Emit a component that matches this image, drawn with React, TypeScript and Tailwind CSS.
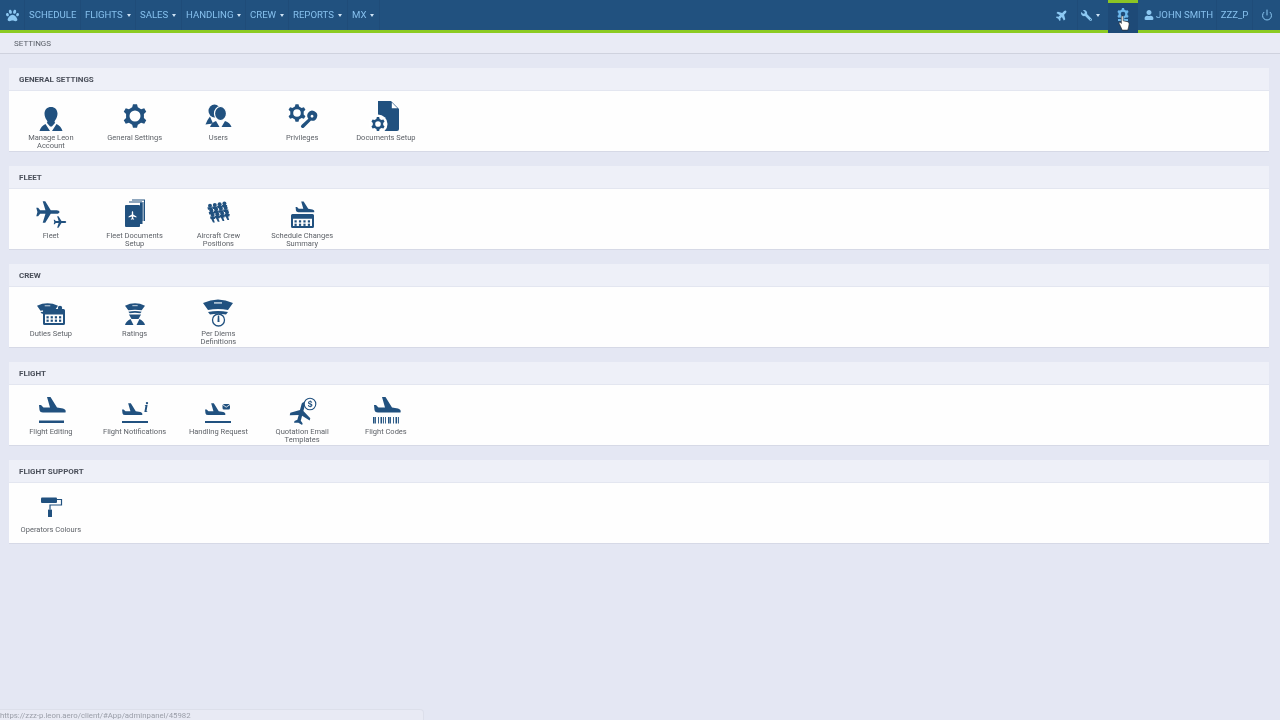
import type { ReactNode } from 'react';
import { FaPaw, FaPlane, FaWrench, FaUser } from 'react-icons/fa';
import { Power } from 'lucide-react';

const BLUE = '#21517f';

const gearPath = (cx: number, cy: number, r: number, hole: number, teeth = 6) => {
  const pts: string[] = [];
  const step = (Math.PI * 2) / teeth;
  for (let i = 0; i < teeth; i++) {
    const a = i * step - Math.PI / 2;
    const w = step * 0.2;
    const base = r * 0.76;
    const p = [
      [a - w * 1.5, base],
      [a - w * 0.8, r],
      [a + w * 0.8, r],
      [a + w * 1.5, base],
    ];
    p.forEach(([t, d]) => pts.push(`${(cx + Math.cos(t) * d).toFixed(2)} ${(cy + Math.sin(t) * d).toFixed(2)}`));
  }
  return `M${pts.join('L')}Z M${cx - hole} ${cy}a${hole} ${hole} 0 1 0 ${hole * 2} 0a${hole} ${hole} 0 1 0 ${-hole * 2} 0Z`;
};

const Gear = ({ cx, cy, r, hole }: { cx: number; cy: number; r: number; hole: number }) => (
  <path d={gearPath(cx, cy, r, hole)} fillRule="evenodd" />
);

// side view plane, x 8-35, y 5-21 at scale 1
const SidePlane = ({ x = 0, y = 0, s = 1 }: { x?: number; y?: number; s?: number }) => (
  <path
    transform={`translate(${x} ${y}) scale(${s})`}
    d="M8 13L10 13L12.5 15.5L19 15.5L16 5L19.5 5L26 15.5L32 16.5Q35.5 17.5 34.5 20.5L12 20.5Q9 20.5 8.5 18Z"
  />
);

const TopPlane = ({ x, y, s, r = 0 }: { x: number; y: number; s: number; r?: number }) => (
  <path
    transform={`translate(${x} ${y}) rotate(${r}) scale(${s}) translate(-12 -12)`}
    d="M22 12c0-1-1.2-1.6-2.4-1.6H14.4L9.6 2.6H7.4l2.4 7.8H5.2L3.4 8.2H1.8L2.8 12L1.8 15.8H3.4L5.2 13.6H9.8L7.4 21.4H9.6L14.4 13.6H19.6C20.8 13.6 22 13 22 12Z"
  />
);

const Calendar = ({ x, y, w, h }: { x: number; y: number; w: number; h: number }) => {
  const cells: ReactNode[] = [];
  for (let r = 0; r < 2; r++)
    for (let c = 0; c < 4; c++)
      cells.push(<rect key={`${r}${c}`} x={x + 3.5 + c * ((w - 7) / 3.6)} y={y + h * 0.45 + r * 3.4} width="2.2" height="2.2" />);
  return (
    <>
      <path
        fillRule="evenodd"
        d={`M${x + 1.5} ${y}h${w - 3}q1.5 0 1.5 1.5v${h - 3}q0 1.5-1.5 1.5h${-(w - 3)}q-1.5 0-1.5-1.5v${-(h - 3)}q0-1.5 1.5-1.5Z M${x + 2} ${y + h * 0.34}v${h * 0.66 - 2}h${w - 4}v${-(h * 0.66 - 2)}Z`}
      />
      {cells}
    </>
  );
};

const Cap = ({ x, y, w }: { x: number; y: number; w: number }) => {
  const s = w / 30;
  return (
    <g transform={`translate(${x} ${y}) scale(${s})`}>
      <path d="M0 4Q15-3 30 4L25 11Q15 9 5 11Z" />
      <path d="M5 13Q15 11 25 13L23 15.500Q15 14 7 15.500Z" />
      <rect x="11" y="3" width="8" height="1.800" fill="#a8bdd0" />
    </g>
  );
};

const Svg = ({ children }: { children: ReactNode }) => (
  <svg width="40" height="36" viewBox="0 0 40 36" fill={BLUE} className="block">
    {children}
  </svg>
);

const icons: Record<string, ReactNode> = {
  manage: (
    <Svg>
      <path d="M20 9c3.800 0 6.500 2.600 6.500 6.600 0 2.300-.8 5-2.300 6.700-.8 1-.9 2 0 2.500l-3.300 3.700h-1.800l-3.300-3.700c.9-.5.8-1.500 0-2.500-1.500-1.700-2.300-4.400-2.300-6.700C13.500 11.600 16.200 9 20 9Z" />
      <path d="M14.500 26l4.500 7H8.500q1.500-5 6-7ZM25.500 26l-4.500 7h10.500q-1.500-5-6-7Z" />
    </Svg>
  ),
  general: <Svg><Gear cx={20} cy={18} r={12} hole={5.500} /></Svg>,
  users: (
    <Svg>
      <ellipse cx={16.500} cy={13} rx={6} ry={6.500} />
      <path d="M12 18.500Q9 22 7.500 26.500L15 25.500Z" />
      <ellipse cx={22.500} cy={15.500} rx={6} ry={7} stroke="#fff" strokeWidth="1.200" />
      <path d="M18 23l3.500 6H12q1.500-4.500 6-6ZM27 23l-3.500 6H33.500q-1.500-4.500-6.500-6Z" />
    </Svg>
  ),
  privileges: (
    <Svg>
      <Gear cx={15} cy={15} r={9} hole={3.800} />
      <g transform="translate(0 -3)">
        <path fillRule="evenodd" d="M26 18a5 5 0 1 1 3 7.500L22 32.500q-1.200 1-2.500 0t0-2.500l6.800-6.300A5 5 0 0 1 26 18ZM30 19.800a1.400 1.400 0 1 0 .1 0Z" />
      </g>
    </Svg>
  ),
  documents: (
    <Svg>
      <path d="M12 3h13l8 8v20q0 2-2 2H12Z" />
      <path d="M25.800 4.500l5.700 5.700h-5.700Z" fill="#fff" />
      <circle cx={12} cy={26} r={9.500} fill="#fff" />
      <Gear cx={12} cy={26} r={7} hole={2.800} />
    </Svg>
  ),
  fleet: (
    <Svg>
      <TopPlane x={17} y={16} s={1.150} />
      <TopPlane x={29} y={26} s={0.620} />
    </Svg>
  ),
  fleetDocs: (
    <Svg>
      <path d="M25 6.500h2.500V28H25Z" />
      <path d="M14 5.500h13v1H14ZM17 3.500h13V25h-1V4.500H17ZM27.500 6h1v19h-1Z" />
      <rect x={10} y={9} width={15} height={22} rx={1} />
      <g fill="#fff"><TopPlane x={17.500} y={19.500} s={0.420} r={-90} /></g>
    </Svg>
  ),
  crewPos: (
    <Svg>
      {[0, 1, 2, 3].map((c) => (
        <g key={c} transform={`translate(${10 + c * 4.800} ${8 - c * 0.8})`}>
          {[0, 1, 2].map((r) => (
            <g key={r} transform={`translate(${r * 1.300} ${r * 4.600})`}>
              <circle cx={2} cy={1.800} r={2} />
              <path d="M-.6 3.300h5.400l-.5 2.500H0Z" />
            </g>
          ))}
          <path d="M3 14.500h2.500l1.300 4h-1.800Z" />
        </g>
      ))}
    </Svg>
  ),
  scheduleChanges: (
    <Svg>
      <SidePlane x={8} y={2} s={0.700} />
      <Calendar x={9} y={18} w={23} h={14} />
    </Svg>
  ),
  duties: (
    <Svg>
      <Cap x={6} y={9} w={21} />
      <Calendar x={12} y={15} w={22} h={16} />
      <circle cx={29} cy={14} r={2.200} />
    </Svg>
  ),
  ratings: (
    <Svg>
      <Cap x={10} y={9} w={20} />
      <path d="M14 20.500h12l-2.500 4.500h-7Z" />
      <path d="M15.500 25l3 6H10q.8-3.500 5.500-6ZM24.500 25l-3 6h8.500q-.8-3.500-5.500-6Z" />
    </Svg>
  ),
  perDiems: (
    <Svg>
      <Cap x={5} y={5} w={30} />
      <circle cx={20.500} cy={26} r={6} fill="none" stroke={BLUE} strokeWidth="1.300" />
      <path d="M19.800 21.500h1.400l.3 6.500h-2Z" />
    </Svg>
  ),
  editing: (
    <Svg>
      <SidePlane />
      <rect x={8} y={28.500} width={25} height={2.500} />
    </Svg>
  ),
  notifications: (
    <Svg>
      <SidePlane x={1} y={7.500} s={0.760} />
      <rect x={7} y={29} width={26} height={2} />
      <text x={29} y={20} fontFamily="Liberation Serif, serif" fontStyle="italic" fontWeight="700" fontSize="15">i</text>
    </Svg>
  ),
  handling: (
    <Svg>
      <SidePlane x={1} y={7.500} s={0.760} />
      <rect x={7} y={29} width={26} height={2} />
      <rect x={24.500} y={12} width={7.500} height={5.500} rx={1.500} />
      <path d="M24.500 12.500l3.700 2.700 3.800-2.700" fill="none" stroke="#fff" strokeWidth=".8" />
    </Svg>
  ),
  quotation: (
    <Svg>
      <TopPlane x={19} y={21} s={1.100} r={-75} />
      <circle cx={28} cy={12} r={5.800} fill="#fff" stroke={BLUE} strokeWidth="1.100" />
      <text x={28} y={15} textAnchor="middle" fontFamily="Liberation Sans, sans-serif" fontSize="8.500" fontWeight="700">$</text>
    </Svg>
  ),
  codes: (
    <Svg>
      <SidePlane />
      {[7, 9, 12, 14.500, 17, 19, 22, 24, 27, 29.500, 32].map((x, i) => (
        <rect key={x} x={x} y={25} width={i % 3 === 0 ? 1.600 : 0.900} height={6.500} />
      ))}
    </Svg>
  ),
  roller: (
    <Svg>
      <rect x={10} y={7.500} width={16} height={5.500} rx={1} />
      <path d="M26 9.500h4.500v5.500H19v4.500" fill="none" stroke={BLUE} strokeWidth="1.200" />
      <rect x={17} y={19.500} width={4} height={7.500} rx={.6} />
    </Svg>
  ),
};

type Item = { icon: string; label: string };

const sections: { title: string; items: Item[] }[] = [
  {
    title: 'GENERAL SETTINGS',
    items: [
      { icon: 'manage', label: 'Manage Leon\nAccount' },
      { icon: 'general', label: 'General Settings' },
      { icon: 'users', label: 'Users' },
      { icon: 'privileges', label: 'Privileges' },
      { icon: 'documents', label: 'Documents Setup' },
    ],
  },
  {
    title: 'FLEET',
    items: [
      { icon: 'fleet', label: 'Fleet' },
      { icon: 'fleetDocs', label: 'Fleet Documents\nSetup' },
      { icon: 'crewPos', label: 'Aircraft Crew\nPositions' },
      { icon: 'scheduleChanges', label: 'Schedule Changes\nSummary' },
    ],
  },
  {
    title: 'CREW',
    items: [
      { icon: 'duties', label: 'Duties Setup' },
      { icon: 'ratings', label: 'Ratings' },
      { icon: 'perDiems', label: 'Per Diems\nDefinitions' },
    ],
  },
  {
    title: 'FLIGHT',
    items: [
      { icon: 'editing', label: 'Flight Editing' },
      { icon: 'notifications', label: 'Flight Notifications' },
      { icon: 'handling', label: 'Handling Request' },
      { icon: 'quotation', label: 'Quotation Email\nTemplates' },
      { icon: 'codes', label: 'Flight Codes' },
    ],
  },
  {
    title: 'FLIGHT SUPPORT',
    items: [{ icon: 'roller', label: 'Operators Colours' }],
  },
];

const menu = [
  { label: 'SCHEDULE', w: 'w-[56px]' },
  { label: 'FLIGHTS', caret: true, w: 'w-[55px]' },
  { label: 'SALES', caret: true, w: 'w-[46px]' },
  { label: 'HANDLING', caret: true, w: 'w-[64px]' },
  { label: 'CREW', caret: true, w: 'w-[43px]' },
  { label: 'REPORTS', caret: true, w: 'w-[59px]' },
  { label: 'MX', caret: true, w: 'w-[32px]' },
];

const Caret = () => <span className="ml-[4px] inline-block border-x-[2.5px] border-t-[3px] border-x-transparent border-t-[#cfe3f5]" />;

function NavBar() {
  return (
    <div className="h-[33px] bg-[#21517f] border-b-[3px] border-[#8ccb22] flex text-[9.600px] text-[#86c0ee]">
      <div className="w-[25px] flex items-center justify-center border-r border-[#1f4c79] text-[#8cc8f2]">
        <FaPaw size={13} />
      </div>
      {menu.map((m) => (
        <div key={m.label} className={`${m.w} flex items-center pl-[4px] border-r border-[#1f4c79] whitespace-nowrap`}>
          {m.label}
          {m.caret && <Caret />}
        </div>
      ))}
      <div className="ml-auto flex h-[30px] items-center">
        <div className="w-[31px] flex justify-center border-r border-[#1f4c79] h-full items-center text-[#8cc8f2]">
          <FaPlane size={12} className="-rotate-45" />
        </div>
        <div className="w-[30px] pl-[3px] flex items-center text-[#8cc8f2]">
          <FaWrench size={11} className="scale-x-[-1]" />
          <Caret />
        </div>
        <div className="relative self-start w-[30px] h-[33px] bg-[#1e4a77] border-t-[3px] border-[#8cc524] flex justify-center pt-[5px]">
          <svg width="12" height="14" viewBox="0 0 12 14" fill="#6db8ec">
            <path fillRule="evenodd" d={gearPath(6, 6, 6, 2.300)} />
            <rect x="1" y="11" width="10" height="2" />
          </svg>
          <svg className="absolute left-[10px] top-[12px]" width="12" height="16" viewBox="0 0 13 18">
            <path fill="#fff" stroke="#2b2b2b" strokeWidth=".7" d="M3.500 1.500q1.200-1 2 0v5l4.800 1q2 .5 2 2.500l-.6 3.500-1 3.500H4.500L1.800 11 .8 9q0-1.200 1.500-.8l1.200 1.300Z" />
          </svg>
        </div>
        <div className="w-[79px] pl-[6px] flex items-center border-r border-[#1f4c79] h-full">
          <FaUser size={10} className="text-[#8cc8f2]" />
          <span className="ml-[2px]">JOHN SMITH</span>
        </div>
        <span className="w-[35px] text-center">ZZZ_P</span>
        <div className="w-[28px] flex justify-center border-l border-[#1f4c79] h-full items-center text-[#8cc8f2]">
          <Power size={12} strokeWidth={2} />
        </div>
      </div>
    </div>
  );
}

function Section({ title, items }: { title: string; items: Item[] }) {
  return (
    <div className="h-[84px] bg-[#fefefe] border-b border-[#d6d9e6] flex flex-col">
      <div className="h-[23px] shrink-0 bg-[#eef0f8] border-b border-[#e3e6f0] pl-[10px] pt-[1px] flex items-center text-[8px] font-bold text-[#4a4f5a]">
        {title}
      </div>
      <div className="flex pt-[7px]">
        {items.map((it) => (
          <div key={it.label} className="w-[83.750px] flex flex-col items-center">
            {icons[it.icon]}
            <div className="w-[80px] whitespace-pre-line text-center text-[7.500px] leading-[7.500px] text-[#5e6268]">
              {it.label}
            </div>
          </div>
        ))}
      </div>
    </div>
  );
}

export default function App() {
  return (
    <div className="relative w-[1280px] h-[720px] overflow-hidden bg-[#e4e7f3] font-['Roboto',sans-serif] blur-[0.3px]">
      <NavBar />
      <div className="h-[21px] bg-[#e9ebf5] border-b border-[#cfd2de] pl-[14px] pt-[1px] flex items-center text-[8px] text-[#5a5f68]">
        SETTINGS
      </div>
      <div className="flex flex-col gap-[14px] px-[9px] pt-[14px] w-[1278px]">
        {sections.map((s) => (
          <Section key={s.title} {...s} />
        ))}
      </div>
      <div className="absolute left-0 bottom-0 w-[424px] h-[11px] bg-[#e8eaf4] border-t border-r border-[#dcdfea] rounded-tr-sm text-[7.800px] leading-[11px] text-[#9a9ea8] whitespace-nowrap">
        https://zzz-p.leon.aero/client/#App/adminpanel/45982
      </div>
    </div>
  );
}
